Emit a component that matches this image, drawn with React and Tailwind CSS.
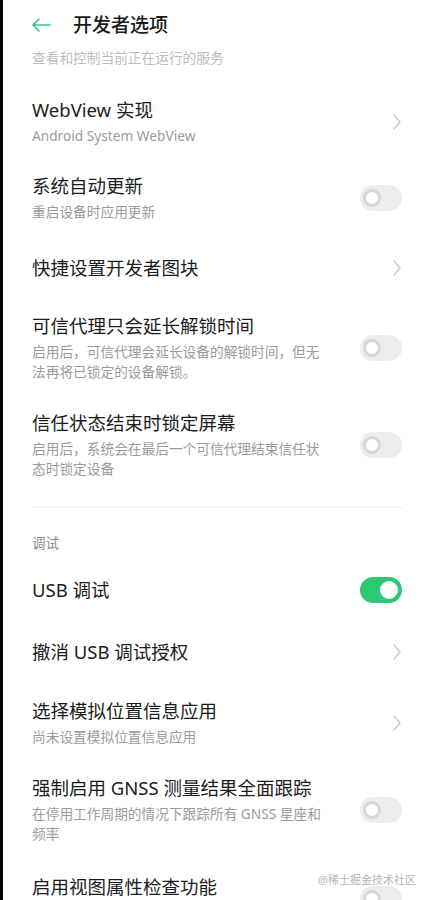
import React from "react";

const font = { fontFamily: '"Noto Sans", "Noto Sans CJK SC", sans-serif' };

function Chevron() {
  return (
    <svg width="10" height="18" viewBox="0 0 10 18" className="shrink-0">
      <path d="M2 2 L8 9 L2 16" fill="none" stroke="#c9c9c9" strokeWidth="1.4" strokeLinecap="round" strokeLinejoin="round" />
    </svg>
  );
}

function ToggleOff() {
  return (
    <div className="w-[42px] h-[26px] rounded-full bg-[#ececec] flex items-center pl-[3px] shrink-0">
      <div className="w-[18px] h-[18px] rounded-full bg-white border-[3px] border-[#d6d6d6]" />
    </div>
  );
}

function ToggleOn() {
  return (
    <div className="w-[42px] h-[26px] rounded-full bg-[#2cc876] flex items-center justify-end pr-[4px] shrink-0">
      <div className="w-[18px] h-[18px] rounded-full bg-white" />
    </div>
  );
}

function Title({ children }) {
  return <div className="text-[18.5px] leading-[26px] text-[#1c1c1c]">{children}</div>;
}

function Sub({ children }) {
  return <div className="mt-[3px] text-[13.7px] leading-[20px] text-[#9b9b9b]">{children}</div>;
}

export default function App() {
  return (
    <div className="w-[430px] h-[900px] overflow-hidden bg-white border-l-[3px] border-black relative" style={font}>
      {/* Header */}
      <div className="h-[50px] flex items-center">
        <div className="w-[70px] flex items-center pl-[27px]">
          <svg width="22" height="16" viewBox="0 0 22 16">
            <path d="M20 8 H3 M9 2 L3 8 L9 14" fill="none" stroke="#34c283" strokeWidth="1.6" strokeLinecap="round" strokeLinejoin="round" />
          </svg>
        </div>
        <div className="text-[19px] font-medium text-[#1a1a1a] leading-[26px]">开发者选项</div>
      </div>

      <div className="pl-[29px] pr-[28px]">
        <div className="h-[16px] flex items-center text-[13.7px] leading-[20px] text-[#bdbdbd]">查看和控制当前正在运行的服务</div>

        <div className="mt-[31px] flex items-center justify-between">
          <div>
            <Title>WebView 实现</Title>
            <Sub>Android System WebView</Sub>
          </div>
          <Chevron />
        </div>

        <div className="mt-[27px] flex items-center justify-between">
          <div>
            <Title>系统自动更新</Title>
            <Sub>重启设备时应用更新</Sub>
          </div>
          <ToggleOff />
        </div>

        <div className="mt-[33px] flex items-center justify-between">
          <Title>快捷设置开发者图块</Title>
          <Chevron />
        </div>

        <div className="mt-[32px] flex items-center justify-between">
          <div>
            <Title>可信代理只会延长解锁时间</Title>
            <Sub>启用后，可信代理会延长设备的解锁时间，但无<br />法再将已锁定的设备解锁。</Sub>
          </div>
          <ToggleOff />
        </div>

        <div className="mt-[28px] flex items-center justify-between">
          <div>
            <Title>信任状态结束时锁定屏幕</Title>
            <Sub>启用后，系统会在最后一个可信代理结束信任状<br />态时锁定设备</Sub>
          </div>
          <ToggleOff />
        </div>

        <div className="mt-[28px] h-px bg-[#ededed]" />

        <div className="mt-[25px] text-[13.5px] leading-[20px] text-[#8c8c8c]">调试</div>

        <div className="mt-[24px] flex items-center justify-between">
          <Title>USB 调试</Title>
          <ToggleOn />
        </div>

        <div className="mt-[36px] flex items-center justify-between">
          <Title>撤消 USB 调试授权</Title>
          <Chevron />
        </div>

        <div className="mt-[33px] flex items-center justify-between">
          <div>
            <Title>选择模拟位置信息应用</Title>
            <Sub>尚未设置模拟位置信息应用</Sub>
          </div>
          <Chevron />
        </div>

        <div className="mt-[28px] flex items-center justify-between">
          <div>
            <Title>强制启用 GNSS 测量结果全面跟踪</Title>
            <Sub>在停用工作周期的情况下跟踪所有 GNSS 星座和<br />频率</Sub>
          </div>
          <ToggleOff />
        </div>

        <div className="mt-[30px] flex items-center justify-between">
          <div>
            <Title>启用视图属性检查功能</Title>
            <Sub>&nbsp;</Sub>
          </div>
          <ToggleOff />
        </div>
      </div>

      <div className="absolute right-[14px] top-[872px] text-[11px] leading-[16px] text-[#b5b5b5] z-20">@稀土掘金技术社区</div>
    </div>
  );
}
